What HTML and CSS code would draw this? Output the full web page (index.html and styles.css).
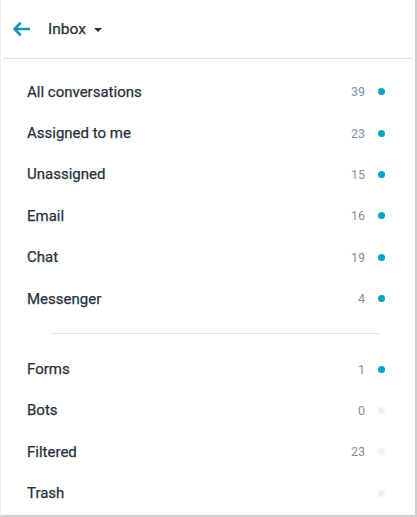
FILE: index.html
```html
<!DOCTYPE html>
<html lang="en">
<head>
    <meta charset="UTF-8">
    <meta name="viewport" content="width=device-width, initial-scale=1.0">
    <title>Inbox</title>
    <link rel="stylesheet" href="styles.css">
</head>
<body>
    <div class="panel">
        <div class="header">
            <svg class="back" width="18" height="14" viewBox="0 0 18 14">
                <path d="M17 7H2.5M8 1.5L2.5 7L8 12.5" fill="none" stroke="#1596ad" stroke-width="2.6" stroke-linecap="round" stroke-linejoin="round"/>
            </svg>
            <span class="title">Inbox</span>
            <span class="caret"></span>
        </div>

        <ul class="list">
            <li class="item"><span class="name">All conversations</span><span class="count">39</span><span class="dot on"></span></li>
            <li class="item"><span class="name">Assigned to me</span><span class="count">23</span><span class="dot on"></span></li>
            <li class="item"><span class="name">Unassigned</span><span class="count">15</span><span class="dot on"></span></li>
            <li class="item"><span class="name">Email</span><span class="count">16</span><span class="dot on"></span></li>
            <li class="item"><span class="name">Chat</span><span class="count">19</span><span class="dot on"></span></li>
            <li class="item"><span class="name">Messenger</span><span class="count">4</span><span class="dot on"></span></li>
        </ul>

        <hr class="sep">

        <ul class="list">
            <li class="item"><span class="name">Forms</span><span class="count">1</span><span class="dot on"></span></li>
            <li class="item"><span class="name">Bots</span><span class="count">0</span><span class="dot"></span></li>
            <li class="item"><span class="name">Filtered</span><span class="count">23</span><span class="dot"></span></li>
            <li class="item"><span class="name">Trash</span><span class="count"></span><span class="dot"></span></li>
        </ul>
    </div>
</body>
</html>
```

FILE: styles.css
```css
body {
    margin: 0;
    font-family: Roboto, "Liberation Sans", sans-serif;
    background: #fff;
}
.panel {
    width: 417px;
    height: 517px;
    box-sizing: border-box;
    border: 1px solid #f1f1f1;
    border-right: 2px solid #cfcfcf;
    border-bottom: 2px solid #cfcfcf;
    border-top: none;
    background: #fff;
    overflow: hidden;
}
.header {
    display: flex;
    align-items: center;
    height: 58px;
    margin: 0 2px;
    padding-left: 9px;
    border-bottom: 1.5px solid #dfe2e5;
}
.back {
    display: block;
}
.title {
    margin-left: 18px;
    font-size: 15.5px;
    color: #26313c;
    -webkit-text-stroke: 0.25px #26313c;
}
.caret {
    margin-left: 8px;
    margin-top: 1px;
    width: 0;
    height: 0;
    border-left: 4px solid transparent;
    border-right: 4px solid transparent;
    border-top: 4.5px solid #26313c;
}
.list {
    list-style: none;
    margin: 0;
    padding: 0;
}
.list:first-of-type {
    padding-top: 12px;
}
.item {
    display: flex;
    align-items: center;
    height: 41.4px;
    padding: 0 30px 0 26px;
}
.name {
    flex: 1;
    font-size: 15px;
    color: #26313c;
    -webkit-text-stroke: 0.25px #26313c;
}
.count {
    font-size: 12.5px;
    color: #8190a0;
    text-align: right;
}
.dot {
    width: 7px;
    height: 7px;
    margin-left: 13px;
    border-radius: 50%;
    background: #eef2f6;
}
.dot.on {
    background: #0ba3bf;
}
.sep {
    margin: 14px 35px 14px 50px;
    border: none;
    border-top: 1.5px solid #e0e3e6;
}
```
